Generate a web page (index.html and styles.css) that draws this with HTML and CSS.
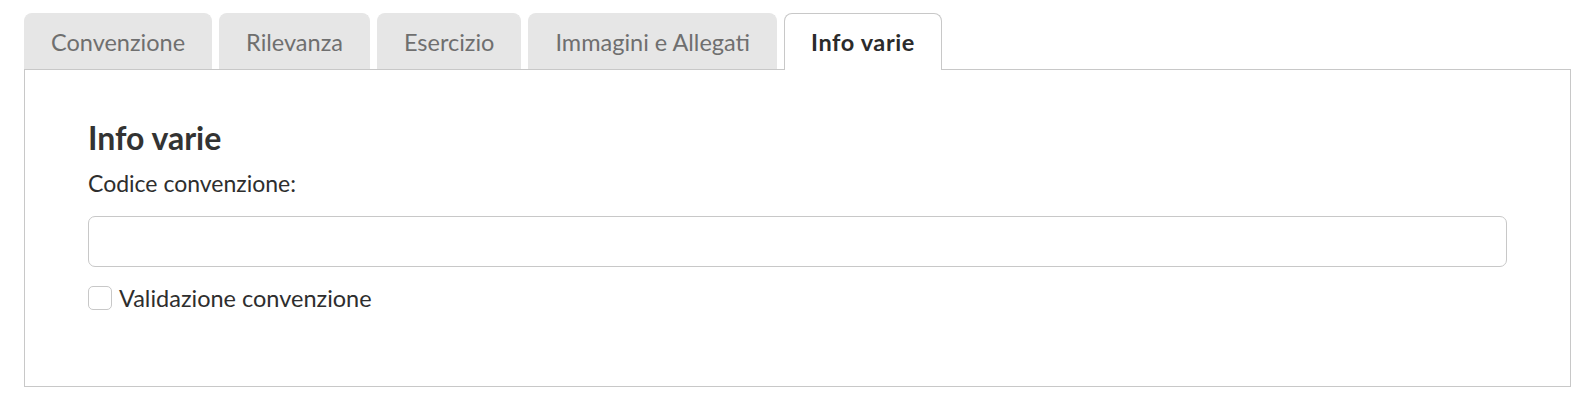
FILE: index.html
```html
<!DOCTYPE html>
<html lang="it">
<head>
  <meta charset="UTF-8">
  <title>Info varie</title>
  <meta name="viewport" content="width=device-width, initial-scale=1">
  <link rel="stylesheet" href="styles.css">
</head>
<body>
  <div class="tabs-box">
    <ul class="tabs">
      <li class="tab">Convenzione</li>
      <li class="tab">Rilevanza</li>
      <li class="tab">Esercizio</li>
      <li class="tab">Immagini e Allegati</li>
      <li class="tab active">Info varie</li>
    </ul>

    <div class="panel">
      <h2>Info varie</h2>
      <label class="field-label" for="codice">Codice convenzione:</label>
      <input class="field" type="text" id="codice">
      <label class="check">
        <input type="checkbox">
        <span>Validazione convenzione</span>
      </label>
    </div>
  </div>
</body>
</html>
```

FILE: styles.css
```css
body {
  margin: 0;
  font-family: 'Lato', 'Liberation Sans', sans-serif;
  color: #333;
  background: #fff;
}

.tabs-box {
  padding: 13px 22px 0 24px;
}

.tabs {
  list-style: none;
  margin: 0;
  padding: 0;
  display: flex;
  gap: 7px;
}

.tab {
  height: 55px;
  padding: 0 26px;
  display: flex;
  align-items: center;
  background: #e6e6e6;
  color: #6f6f6f;
  font-size: 23.5px;
  border-radius: 8px 8px 0 0;
  border: 1px solid #e6e6e6;
  border-bottom: none;
}

.tab.active {
  background: #fff;
  border-color: #c8c8c8;
  color: #2b2b2b;
  font-weight: 700;
  letter-spacing: 0.6px;
  position: relative;
  margin-bottom: -1px;
  height: 56px;
}

.panel {
  border: 1px solid #c8c8c8;
  padding: 48px 63px 74px;
}

h2 {
  margin: 0 0 12px;
  font-size: 32px;
  font-weight: 700;
  color: #333;
}

.field-label {
  display: block;
  font-size: 23px;
  color: #2e2e2e;
  margin-bottom: 19px;
}

.field {
  display: block;
  box-sizing: border-box;
  width: 100%;
  height: 51px;
  border: 1px solid #c8c8c8;
  border-radius: 7px;
  margin: 0 0 17px;
  font-size: 20px;
}

.check {
  display: flex;
  align-items: center;
  gap: 7px;
  font-size: 23.5px;
  color: #2e2e2e;
}

.check input {
  appearance: none;
  margin: 0;
  width: 24px;
  height: 24px;
  border: 1px solid #c8c8c8;
  border-radius: 5px;
  background: #fff;
}
```
